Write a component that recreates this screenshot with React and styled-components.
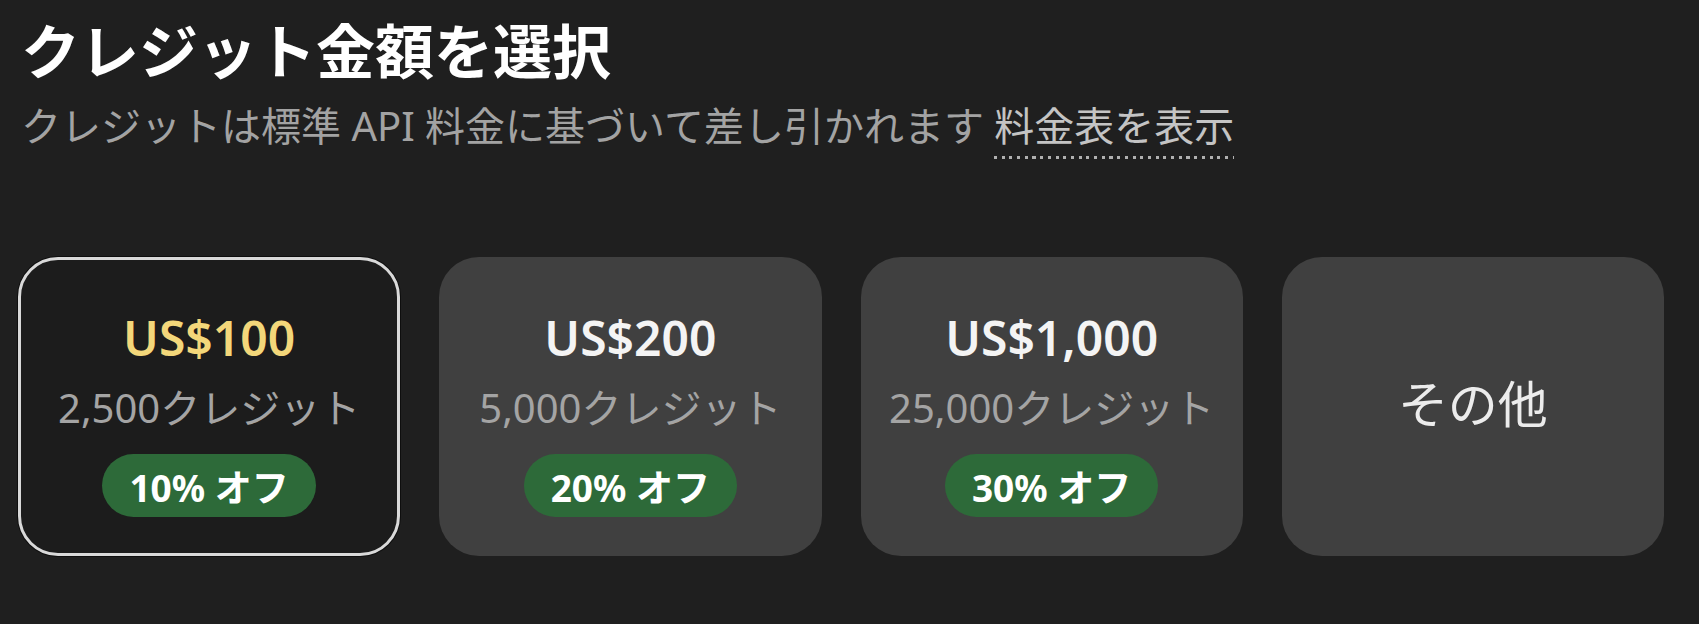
import React from "react";
import styled, { createGlobalStyle } from "styled-components";

const Global = createGlobalStyle`
  html, body {
    margin: 0;
    padding: 0;
    background: #1f1f1f;
  }
  body {
    font-family: "Noto Sans", "Noto Sans CJK JP", sans-serif;
    -webkit-font-smoothing: antialiased;
  }
`;

const Page = styled.div`
  width: 1699px;
  height: 624px;
  box-sizing: border-box;
  padding: 14px 0 0 18px;
  background: #1f1f1f;
`;

const Header = styled.header`
  padding-left: 3px;
  display: flex;
  flex-direction: column;
`;

const Title = styled.h1`
  margin: 0;
  font-family: "Noto Sans CJK JP", sans-serif;
  font-weight: 700;
  font-size: 59px;
  line-height: 70px;
  color: #ffffff;
`;

const Subtitle = styled.p`
  margin: 14px 0 0;
  font-family: "Noto Sans", "Noto Sans CJK JP", sans-serif;
  font-weight: 400;
  font-size: 40px;
  line-height: 56px;
  color: #a3a3a3;
`;

const Link = styled.span`
  color: #c4c4c4;
  padding-bottom: 6px;
  background-image: repeating-linear-gradient(
    to right,
    #b0b0b0 0 3px,
    transparent 3px 7.7px
  );
  background-repeat: no-repeat;
  background-size: 100% 3px;
  background-position: 0 100%;
`;

const Grid = styled.div`
  margin-top: 103px;
  width: 1646px;
  display: grid;
  grid-template-columns: repeat(4, 1fr);
  column-gap: 39px;
`;

const Card = styled.div`
  box-sizing: border-box;
  height: 299px;
  border-radius: 40px;
  background: ${(p) => (p.$selected ? "#1c1c1c" : "#404040")};
  border: 3px solid ${(p) => (p.$selected ? "#d9d9d9" : "transparent")};
  box-shadow: ${(p) => (p.$selected ? "0 0 0 1px #0e0e0e" : "none")};
  display: flex;
  flex-direction: column;
  align-items: center;
  justify-content: ${(p) => (p.$plain ? "center" : "flex-start")};
  padding-top: ${(p) => (p.$plain ? "0" : "49px")};
`;

const Price = styled.div`
  font-family: "Noto Sans", sans-serif;
  font-weight: 600;
  font-size: 48px;
  line-height: 58px;
  color: ${(p) => (p.$selected ? "#f3d77a" : "#f4f4f4")};
`;

const Credits = styled.div`
  margin-top: 17px;
  font-family: "Noto Sans", "Noto Sans CJK JP", sans-serif;
  font-weight: 400;
  font-size: 40px;
  line-height: 48px;
  color: #a4a4a4;
  white-space: nowrap;
`;

const Badge = styled.div`
  margin-top: 22px;
  height: 63px;
  box-sizing: border-box;
  padding: 0 27px;
  border-radius: 32px;
  background: #2d6a39;
  display: flex;
  align-items: center;
  font-family: "Noto Sans", "Noto Sans CJK JP", sans-serif;
  font-weight: 700;
  font-size: 37px;
  color: #ffffff;
`;

const Other = styled.div`
  font-family: "Noto Sans CJK JP", sans-serif;
  font-weight: 400;
  font-size: 50px;
  color: #ececec;
  margin-top: -11px;
`;

const options = [
  { price: "US$100", credits: "2,500クレジット", off: "10% オフ", selected: true },
  { price: "US$200", credits: "5,000クレジット", off: "20% オフ" },
  { price: "US$1,000", credits: "25,000クレジット", off: "30% オフ" },
];

export default function App() {
  return (
    <>
      <Global />
      <Page>
        <Header>
          <Title>クレジット金額を選択</Title>
          <Subtitle>
            クレジットは標準 API 料金に基づいて差し引かれます <Link>料金表を表示</Link>
          </Subtitle>
        </Header>
        <Grid>
          {options.map((o) => (
            <Card key={o.price} $selected={o.selected}>
              <Price $selected={o.selected}>{o.price}</Price>
              <Credits>{o.credits}</Credits>
              <Badge>{o.off}</Badge>
            </Card>
          ))}
          <Card $plain>
            <Other>その他</Other>
          </Card>
        </Grid>
      </Page>
    </>
  );
}
